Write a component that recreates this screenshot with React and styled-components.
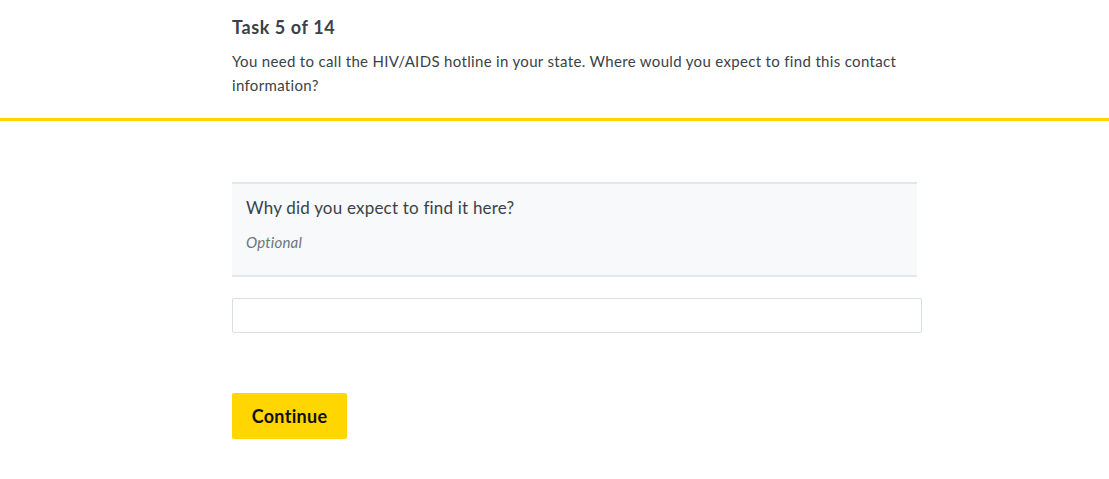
import React from "react";
import styled, { createGlobalStyle } from "styled-components";

const Global = createGlobalStyle`
  html, body { margin: 0; padding: 0; background: #ffffff; }
  body { font-family: Lato, "Open Sans", sans-serif; color: #3a4249; }
  * { box-sizing: border-box; }
`;

const Header = styled.header`
  border-bottom: 3px solid #ffd600;
  padding: 15px 0 21px 232px;
`;

const Title = styled.h1`
  margin: 0 0 10px;
  font-size: 18px;
  line-height: 24px;
  font-weight: 700;
  letter-spacing: 0.6px;
  color: #3a4249;
`;

const Prompt = styled.p`
  margin: 0;
  width: 690px;
  font-size: 15px;
  line-height: 24px;
  letter-spacing: 0.33px;
  color: #3a4249;
`;

const Main = styled.main`
  padding: 61px 0 40px 232px;
  display: flex;
  flex-direction: column;
`;

const QuestionPanel = styled.div`
  width: 685px;
  background: #f7f9fa;
  border-top: 2px solid #e2e9ec;
  border-bottom: 2px solid #e2e9ec;
  padding: 12px 14px 23px;
`;

const Question = styled.div`
  font-size: 17px;
  line-height: 24px;
  letter-spacing: 0.2px;
  color: #3a4249;
`;

const Hint = styled.div`
  margin-top: 12px;
  font-size: 15px;
  line-height: 20px;
  font-style: italic;
  letter-spacing: 0.2px;
  color: #6b757c;
`;

const Input = styled.input`
  margin-top: 21px;
  width: 690px;
  height: 35px;
  border: 1px solid #d6dfe3;
  border-radius: 2px;
  background: #fff;
  font: inherit;
  padding: 0 10px;
  outline: none;
`;

const Button = styled.button`
  margin-top: 60px;
  align-self: flex-start;
  width: 115px;
  height: 46px;
  border: none;
  border-radius: 2px;
  background: #ffd600;
  color: #111;
  font-family: Lato, "Open Sans", sans-serif;
  font-weight: 700;
  font-size: 18px;
  letter-spacing: 0.3px;
  cursor: pointer;
`;

export default function App() {
  return (
    <>
      <Global />
      <Header>
        <Title>Task 5 of 14</Title>
        <Prompt>
          You need to call the HIV/AIDS hotline in your state. Where would you
          expect to find this contact information?
        </Prompt>
      </Header>
      <Main>
        <QuestionPanel>
          <Question>Why did you expect to find it here?</Question>
          <Hint>Optional</Hint>
        </QuestionPanel>
        <Input type="text" />
        <Button>Continue</Button>
      </Main>
    </>
  );
}
